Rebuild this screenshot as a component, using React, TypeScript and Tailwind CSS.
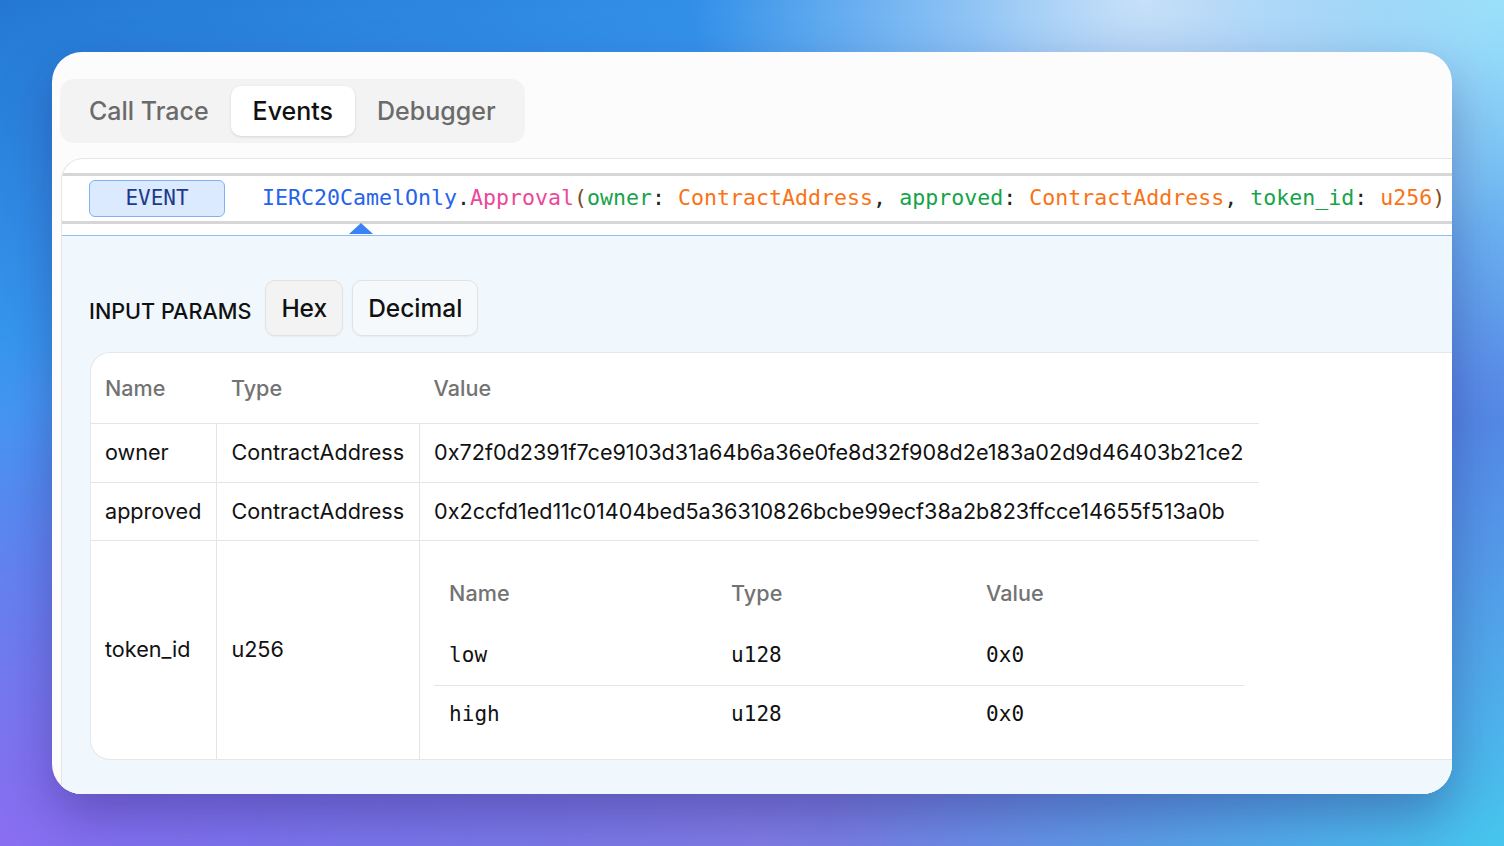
const sans = { fontFamily: "Inter, 'Noto Sans', sans-serif" };

const tabs = ["Call Trace", "Events", "Debugger"];

const params = [
  {
    name: "owner",
    type: "ContractAddress",
    value: "0x72f0d2391f7ce9103d31a64b6a36e0fe8d32f908d2e183a02d9d46403b21ce2",
  },
  {
    name: "approved",
    type: "ContractAddress",
    value: "0x2ccfd1ed11c01404bed5a36310826bcbe99ecf38a2b823ffcce14655f513a0b",
  },
];

const members = [
  { name: "low", type: "u128", value: "0x0" },
  { name: "high", type: "u128", value: "0x0" },
];

function Signature() {
  return (
    <span className="whitespace-pre font-['DejaVu_Sans_Mono',monospace] text-[21.6px] text-[#222]">
      <span className="text-[#2563eb]">IERC20CamelOnly</span>.
      <span className="text-[#ec4899]">Approval</span>
      <span className="text-[#7c4a1e]">(</span>
      <span className="text-[#16a34a]">owner</span>: <span className="text-[#f97316]">ContractAddress</span>,{" "}
      <span className="text-[#16a34a]">approved</span>: <span className="text-[#f97316]">ContractAddress</span>,{" "}
      <span className="text-[#16a34a]">token_id</span>: <span className="text-[#f97316]">u256</span>
      <span className="text-[#7c4a1e]">)</span>
    </span>
  );
}

function MemberTable() {
  return (
    <table className="w-full border-collapse text-left">
      <thead>
        <tr className="h-[67px] text-[21.6px] font-medium text-[#737373]">
          <th className="w-[282px] px-[15px] font-medium">Name</th>
          <th className="w-[255px] px-[15px] font-medium">Type</th>
          <th className="px-[15px] font-medium">Value</th>
        </tr>
      </thead>
      <tbody className="font-['DejaVu_Sans_Mono',monospace] text-[21px] text-[#111]">
        {members.map((m, i) => (
          <tr key={m.name} className={i === 0 ? "h-[59px] border-b border-[#e5e5e5]" : "h-[58px]"}>
            <td className="px-[15px]">{m.name}</td>
            <td className="px-[15px]">{m.type}</td>
            <td className="px-[15px]">{m.value}</td>
          </tr>
        ))}
      </tbody>
    </table>
  );
}

export default function App() {
  return (
    <div
      className="h-[846px] w-full overflow-hidden pl-[52px] pt-[52px] bg-[radial-gradient(30%_40%_at_76%_0%,rgba(206,226,248,0.95),transparent),radial-gradient(35%_50%_at_100%_0%,#8fe0fb,transparent),radial-gradient(55%_60%_at_0%_100%,#8a6ef2,transparent),radial-gradient(45%_55%_at_100%_100%,#46c6ee,transparent),radial-gradient(45%_45%_at_50%_100%,#7f7ee4,transparent),linear-gradient(160deg,#2478d3_0%,#3a9df4_30%,#4f86e6_60%,#6a7ae6_100%)]"
      style={sans}
    >
      <div className="flex h-[742px] w-[1400px] flex-col overflow-hidden rounded-[30px] bg-[#fcfcfc] pl-[8px] pt-[27px] shadow-[0_22px_50px_rgba(40,20,100,0.35)]">
        <div className="inline-flex h-[64px] self-start rounded-[14px] bg-[#f3f3f3] p-[7px]">
          {tabs.map((t) => (
            <button
              key={t}
              className={
                t === "Events"
                  ? "h-[50px] rounded-[10px] bg-white px-[22px] pt-[2px] text-[25px] font-medium text-[#111] shadow-[0_1px_3px_rgba(0,0,0,0.12)]"
                  : "h-[50px] rounded-[10px] px-[22px] pt-[2px] text-[25px] font-medium text-[#6b6b6b]"
              }
            >
              {t}
            </button>
          ))}
        </div>

        <div className="ml-px mt-[15px] flex w-[1420px] flex-1 flex-col overflow-hidden rounded-tl-[22px] border-l border-t border-[#e6e6e6] bg-white">
          <div className="h-[14px]" />
          <div className="h-[3px] bg-[#d6d6d6]" />
          <div className="flex h-[45px] items-center pl-[27px]">
            <div className="flex h-[37px] w-[136px] items-center justify-center rounded-[6px] border border-[#7fb2f5] bg-[#dbeafe] font-['DejaVu_Sans_Mono',monospace] text-[21px] text-[#1e3a8a]">
              EVENT
            </div>
            <div className="ml-[37px]">
              <Signature />
            </div>
          </div>
          <div className="h-[3px] bg-[#d6d6d6]" />
          <div className="flex h-[12px] items-end border-b border-[#8fbdf6] pl-[287px]">
            <svg width="24" height="11" viewBox="0 0 24 11" className="mb-[1px] block">
              <path d="M12 0 L24 11 L0 11 Z" fill="#3b82f6" />
            </svg>
          </div>

          <div className="flex-1 bg-[#f0f7fd] pl-[27px] pt-[44px]">
            <div className="flex h-[56px] items-center">
              <span className="pt-[6px] text-[21.6px] font-medium text-[#111]">INPUT PARAMS</span>
              <button className="ml-[14px] h-[56px] rounded-[10px] border border-[#e2e2e2] bg-[#f3f3f3] px-[15px] text-[24.5px] font-medium text-[#111] shadow-[0_1px_2px_rgba(0,0,0,0.05)]">
                Hex
              </button>
              <button className="ml-[9px] h-[56px] rounded-[10px] border border-[#e2e2e2] bg-[#f6f9fc] px-[15px] text-[24.5px] font-medium text-[#111] shadow-[0_1px_2px_rgba(0,0,0,0.05)]">
                Decimal
              </button>
            </div>

            <div className="ml-px mt-[16px] overflow-hidden rounded-l-[20px] border-y border-l border-[#e5e7eb] bg-white">
              <table className="border-collapse text-left text-[21.6px] text-[#111]">
                <thead>
                  <tr className="h-[70px] text-[#737373]">
                    <th className="pl-[14px] pr-[15px] font-medium">Name</th>
                    <th className="pl-[14px] pr-[15px] font-medium">Type</th>
                    <th className="pl-[14px] pr-[15px] font-medium">Value</th>
                  </tr>
                </thead>
                <tbody>
                  {params.map((p, i) => (
                    <tr key={p.name} className={i === 0 ? "h-[59px] border-t border-[#e5e5e5]" : "h-[58px] border-t border-[#e5e5e5]"}>
                      <td className="border-r border-[#e5e5e5] pl-[14px] pr-[15px]">{p.name}</td>
                      <td className="border-r border-[#e5e5e5] pl-[14px] pr-[15px]">{p.type}</td>
                      <td className="pl-[14px] pr-[15px]">{p.value}</td>
                    </tr>
                  ))}
                  <tr className="h-[218px] border-t border-[#e5e5e5]">
                    <td className="border-r border-[#e5e5e5] pl-[14px] pr-[15px]">token_id</td>
                    <td className="border-r border-[#e5e5e5] pl-[14px] pr-[15px]">u256</td>
                    <td className="pb-[15px] pl-[14px] pr-[15px] pt-[19px]">
                      <MemberTable />
                    </td>
                  </tr>
                </tbody>
              </table>
            </div>
          </div>
        </div>
      </div>
    </div>
  );
}
